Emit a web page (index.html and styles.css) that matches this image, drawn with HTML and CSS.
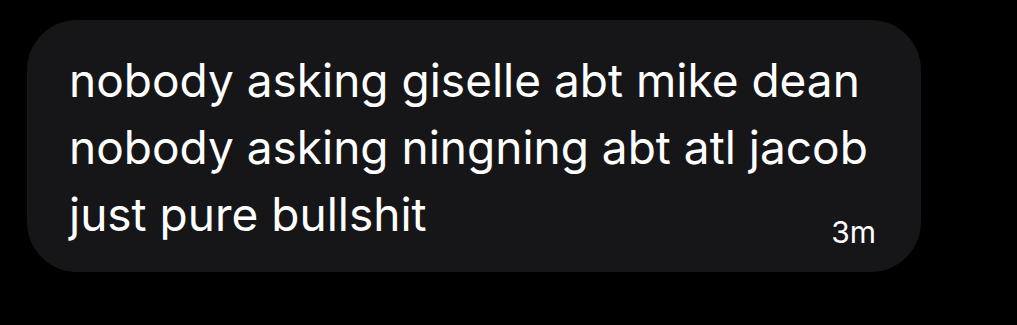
FILE: index.html
```html
<!DOCTYPE html>
<html>
<head>
<meta charset="utf-8">
<link rel="stylesheet" href="styles.css">
</head>
<body>
<div class="bubble">
  <div class="msg">nobody asking giselle abt mike dean<br>nobody asking ningning abt atl jacob<br>just pure bullshit</div>
  <div class="time">3m</div>
</div>
</body>
</html>
```
FILE: styles.css
```css
html, body {
  margin: 0;
  padding: 0;
  background: #000;
}
body {
  width: 1017px;
  height: 325px;
  overflow: hidden;
  font-family: Inter, "Noto Sans", sans-serif;
  color: #fff;
}
.bubble {
  margin: 20px 0 0 27px;
  width: 894px;
  height: 252px;
  box-sizing: border-box;
  background: #161618;
  border-radius: 50px;
  padding: 27px 45px 0 42px;
  display: flex;
  align-items: flex-start;
}
.msg {
  flex: 1;
  min-width: 0;
  white-space: nowrap;
  font-size: 46px;
  line-height: 67px;
  letter-spacing: 0;
}
.time {
  align-self: flex-start;
  margin-top: 167px;
  font-size: 30px;
  line-height: 36px;
}
```
